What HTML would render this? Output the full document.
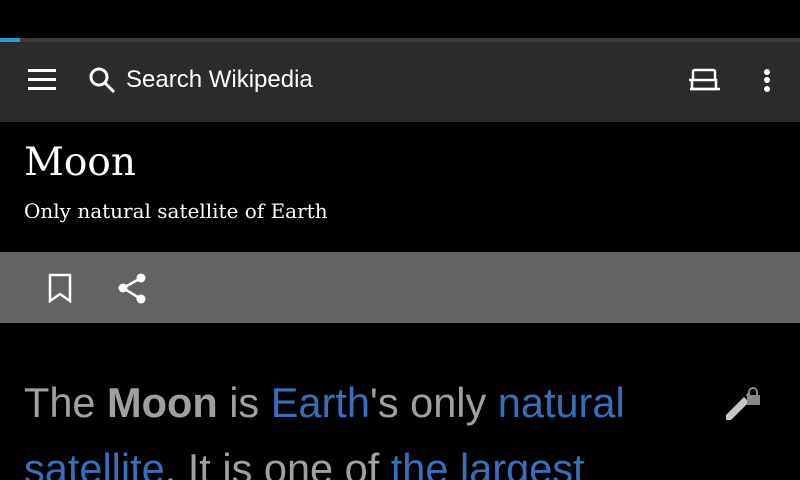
<!DOCTYPE html>
<html style="overflow:hidden;width:800px;height:480px"><head><meta charset="utf-8"><style>
*{margin:0;padding:0;box-sizing:border-box}
body{width:800px;height:480px;overflow:hidden;background:#000;position:relative;font-family:"Liberation Sans",sans-serif}
.abs{position:absolute}
a{color:#3670bd;text-decoration:none}
</style></head><body>
<div class="abs" style="left:0;top:38px;width:800px;height:4px;background:#3c3c3c"></div>
<div class="abs" style="left:0;top:38px;width:20px;height:4px;background:#2a9ad8"></div>
<div class="abs" style="left:0;top:42px;width:800px;height:80px;background:#2b2b2b"></div>
<svg class="abs" style="left:28px;top:69px" width="28" height="22"><rect x="0" y="0" width="28" height="3" fill="#fff"/><rect x="0" y="9" width="28" height="3" fill="#fff"/><rect x="0" y="18" width="28" height="3" fill="#fff"/></svg>
<svg class="abs" style="left:88px;top:66px" width="30" height="30"><circle cx="11" cy="11" r="8" stroke="#fff" stroke-width="3" fill="none"/><line x1="17" y1="17" x2="26" y2="26" stroke="#fff" stroke-width="3"/></svg>
<div class="abs" style="left:126px;top:66px;color:#fff;font-size:24px;line-height:28px">Search Wikipedia</div>
<svg class="abs" style="left:688px;top:68px" width="34" height="24"><path d="M5 12 V4 Q5 2 7 2 H25 Q27 2 27 4 V12" stroke="#fff" stroke-width="2.5" fill="none"/><rect x="4" y="12" width="24" height="9" stroke="#fff" stroke-width="2.5" fill="none"/><line x1="2" y1="21" x2="32" y2="21" stroke="#fff" stroke-width="2.5"/><line x1="1" y1="12" x2="6" y2="12" stroke="#fff" stroke-width="2.5"/></svg>
<svg class="abs" style="left:760px;top:68px" width="14" height="26"><circle cx="7" cy="4" r="3" fill="#fff"/><circle cx="7" cy="12" r="3" fill="#fff"/><circle cx="7" cy="21" r="3" fill="#fff"/></svg>
<div class="abs" style="left:24px;top:138px;color:#fff;font-family:'DejaVu Serif','Liberation Serif',serif;font-size:39px;line-height:50px">Moon</div>
<div class="abs" style="left:24px;top:198px;color:#fff;font-family:'DejaVu Serif','Liberation Serif',serif;font-size:20px;line-height:26px">Only natural satellite of Earth</div>
<div class="abs" style="left:0;top:252px;width:800px;height:71px;background:#636363"></div>
<svg class="abs" style="left:48px;top:273px" width="24" height="30"><path d="M2 2 H22 V28 L12 21 L2 28 Z" stroke="#fff" stroke-width="2.5" fill="none" stroke-linejoin="miter"/></svg>
<svg class="abs" style="left:116px;top:272px" width="34" height="32"><circle cx="25" cy="6" r="4.5" fill="#fff"/><circle cx="7" cy="16" r="4.5" fill="#fff"/><circle cx="25" cy="27" r="4.5" fill="#fff"/><path d="M25 6 L7 16 L25 27" stroke="#fff" stroke-width="2.5" fill="none"/></svg>
<div class="abs" style="left:24px;top:370px;color:#a0a0a0;font-size:41.5px;line-height:66px;width:640px;white-space:nowrap">The <b>Moon</b> is <a>Earth</a>'s only <a>natural</a><br><a>satellite</a>. It is one of <a>the largest</a></div>
<svg class="abs" style="left:722px;top:386px" width="42" height="36"><path d="M4 34 L4 29 L22 11 L27 16 L9 34 Z" fill="#c8c8c8"/><path d="M24 9 L26 7 L31 12 L29 14 Z" fill="#c8c8c8"/><path d="M27 9 V6 A4 4 0 0 1 35 6 V9" stroke="#888" stroke-width="2" fill="none"/><rect x="25" y="9" width="13" height="10" fill="#888"/></svg>
</body></html>
